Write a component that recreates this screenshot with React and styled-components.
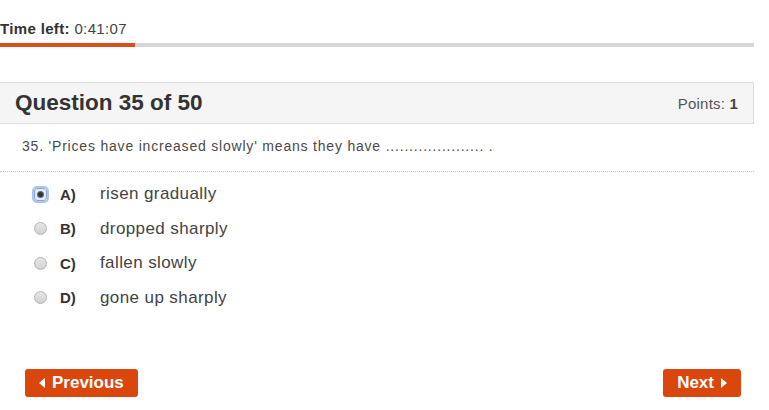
import { styled, createGlobalStyle } from 'styled-components';

const GlobalStyle = createGlobalStyle`
  body {
    margin: 0;
    background: #fff;
    font-family: "Liberation Sans", Arial, sans-serif;
    color: #333;
  }
`;

const Page = styled.div`
  width: 754px;
  display: flex;
  flex-direction: column;
`;

const Timer = styled.div`
  padding-top: 20px;
  font-size: 15px;
  line-height: 18px;
  letter-spacing: 0.35px;
  color: #444;
  b {
    color: #333;
  }
`;

const Track = styled.div`
  margin-top: 5px;
  height: 4px;
  background: #d6d6d6;
`;

const Fill = styled.div`
  height: 100%;
  background: #d4521a;
`;

const Header = styled.div`
  margin-top: 35px;
  height: 40px;
  background: #f5f5f5;
  border-top: 1px solid #dcdcdc;
  border-bottom: 1px solid #dcdcdc;
  border-right: 1px solid #dcdcdc;
  display: flex;
  align-items: center;
  justify-content: space-between;
  padding: 0 15px;
`;

const Title = styled.h2`
  margin: 0;
  font-size: 22.5px;
  font-weight: bold;
  color: #333;
`;

const Points = styled.span`
  font-size: 15px;
  color: #555;
  letter-spacing: 0.2px;
  b {
    color: #444;
  }
`;

const Prompt = styled.div`
  padding: 14px 22px 17px;
  font-size: 14px;
  line-height: 16px;
  color: #4a4a4a;
  letter-spacing: 0.8px;
  border-bottom: 1px dotted #c8c8c8;
`;

const Options = styled.ul`
  list-style: none;
  margin: 0;
  padding: 5px 0 0 34px;
  display: flex;
  flex-direction: column;
`;

const Option = styled.li`
  height: 34.5px;
  display: flex;
  align-items: center;
`;

const Radio = styled.span`
  width: 13px;
  height: 13px;
  box-sizing: border-box;
  border-radius: 50%;
  border: 1px solid #b4b4b4;
  background: linear-gradient(#e6e6e6, #d2d2d2);
  position: relative;
  ${(p) =>
    p.$checked &&
    `
    outline: 2px solid #a9c6ec;
    border-radius: 3px;
    border-color: #8aa7d6;
    background: #dfe9f7;
    &::after {
      content: "";
      position: absolute;
      left: 2px;
      top: 2px;
      width: 7px;
      height: 7px;
      border-radius: 50%;
      background: radial-gradient(#333 35%, #777 70%, #bbb 100%);
    }
  `}
`;

const Letter = styled.span`
  width: 40px;
  margin-left: 13px;
  font-size: 15px;
  font-weight: bold;
  color: #333;
`;

const Answer = styled.span`
  font-size: 17px;
  letter-spacing: 0.4px;
  color: #444;
`;

const Nav = styled.div`
  margin-top: 54px;
  padding: 0 13px 0 25px;
  display: flex;
  justify-content: space-between;
`;

const Button = styled.button`
  height: 28px;
  padding: 0 14px;
  border: none;
  border-radius: 3px;
  background: #d9470c;
  color: #fff;
  font-family: "Liberation Sans", Arial, sans-serif;
  font-size: 17px;
  font-weight: bold;
  display: flex;
  align-items: center;
  gap: 7px;
  cursor: pointer;
`;

const Caret = ({ dir }) => (
  <svg width="6" height="10" viewBox="0 0 6 10">
    <path d={dir === 'left' ? 'M6 0 L0 5 L6 10 Z' : 'M0 0 L6 5 L0 10 Z'} fill="#fff" />
  </svg>
);

const answers = [
  { key: 'A)', text: 'risen gradually', checked: true },
  { key: 'B)', text: 'dropped sharply' },
  { key: 'C)', text: 'fallen slowly' },
  { key: 'D)', text: 'gone up sharply' },
];

export default function App() {
  return (
    <Page>
      <GlobalStyle />
      <Timer>
        <b>Time left:</b> 0:41:07
      </Timer>
      <Track>
        <Fill style={{ width: `${(135 / 754) * 100}%` }} />
      </Track>
      <Header>
        <Title>Question 35 of 50</Title>
        <Points>
          Points: <b>1</b>
        </Points>
      </Header>
      <Prompt>35. 'Prices have increased slowly' means they have ..................... .</Prompt>
      <Options>
        {answers.map((a) => (
          <Option key={a.key}>
            <Radio $checked={a.checked} />
            <Letter>{a.key}</Letter>
            <Answer>{a.text}</Answer>
          </Option>
        ))}
      </Options>
      <Nav>
        <Button>
          <Caret dir="left" />
          Previous
        </Button>
        <Button>
          Next
          <Caret dir="right" />
        </Button>
      </Nav>
    </Page>
  );
}
